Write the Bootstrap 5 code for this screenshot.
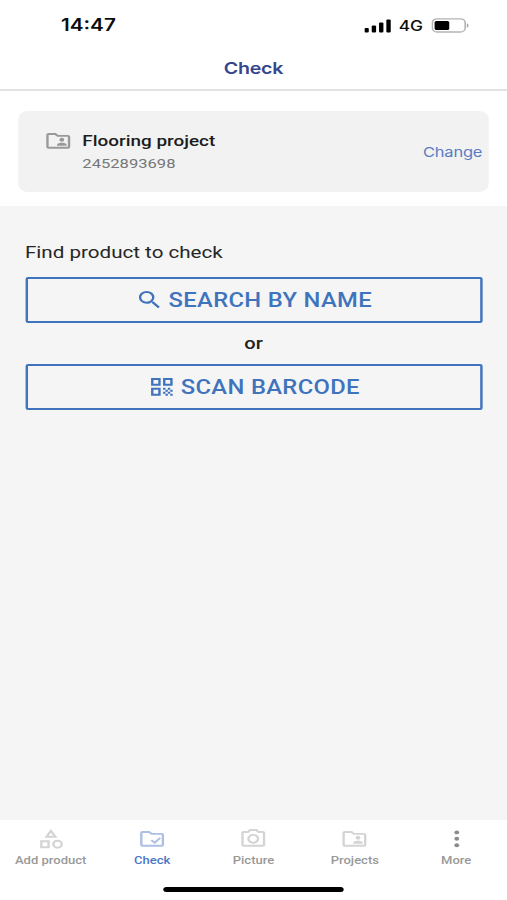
<!DOCTYPE html>
<html lang="en">
<head>
<meta charset="utf-8">
<meta name="viewport" content="width=device-width, initial-scale=1">
<title>Check</title>
<link href="https://cdn.jsdelivr.net/npm/bootstrap@5.3.0/dist/css/bootstrap.min.css" rel="stylesheet">
<style>
  html, body { height: 100%; overflow: hidden; }
  body { background: #fff; font-family: Roboto, "Liberation Sans", sans-serif; }
  .phone { width: 416px; height: 900px; transform: scaleX(1.21875); transform-origin: 0 0; background: #f5f5f5; }
  .phone svg { display: block; flex: none; }
  .ic { width: 23.6px; height: 23.6px; fill: currentColor; }
  .inter { font-family: Inter, "Liberation Sans", sans-serif; }
  .status { height: 50px; padding: 1px 31px 0 50px; color: #0c0c0c; }
  .clock { font-size: 17px; font-weight: 600; }
  .net { font-size: 14.2px; font-weight: 500; margin: 1px 7px 0 6.5px; }
  .title { height: 41px; padding-bottom: 3px; border-bottom: 2px solid #e3e3e3; color: #35468c; font-size: 16.1px; font-weight: 600; letter-spacing: -.2px; }
  .project-wrap { height: 115px; padding: 20px 14.8px 14px; }
  .project { background: #f2f2f2; border-radius: 8px; padding: 1px 5.5px 0 21.2px; }
  .project-name { font-size: 15.5px; line-height: 22px; padding-top: 1px; font-weight: 500; color: #1c1c1c; }
  .project-id { font-size: 13.6px; line-height: 23px; color: #777; }
  .change { font-size: 13.5px; letter-spacing: -.15px; color: #5a7cc2; padding-top: 1px; }
  .find { padding: 32px 20.5px 0; }
  .prompt { font-size: 16.9px; line-height: 26px; color: #262626; padding-top: 1px; margin-bottom: 12px; }
  .action { height: 46px; border: 2px solid #3f74bd; border-radius: 2px; color: #3f74bd; font-size: 19.5px; font-weight: 500; letter-spacing: .28px; padding: 0; --bs-btn-hover-color: #3f74bd; }
  .action-name { padding-top: 2px; }
  .or { height: 41px; font-size: 16.5px; font-weight: 500; color: #222; padding-top: 2px; }
  .tabs { height: 80px; }
  .tab { color: #999; font-size: 10.7px; line-height: 14px; padding-top: 7px; font-weight: 500; }
  .tab .ic { margin-bottom: 3px; color: #d4d4d4; }
  .tab.on { color: #4c77c6; }
  .tab.on .ic { color: #adbfe2; }
  .tab.more .ic { color: #8b8b8b; }
  .home { width: 148px; height: 5px; border-radius: 3px; background: #000; margin: 0 auto 8px; }
  .project .ic { color: #999; }
</style>
<script src="https://cdn.jsdelivr.net/npm/bootstrap@5.3.0/dist/js/bootstrap.bundle.min.js"></script>
</head>
<body>
<div class="phone d-flex flex-column">
  <header class="bg-white">
    <div class="status inter d-flex align-items-center">
      <span class="clock me-auto">14:47</span>
      <svg width="22" height="14" viewBox="0 0 22 14"><rect x="0" y="9" width="3.600" height="4.500" rx="1"/><rect x="6" y="6.500" width="3.600" height="7" rx="1"/><rect x="12" y="3.500" width="3.600" height="10" rx="1"/><rect x="18" y="0.500" width="3.600" height="13" rx="1"/></svg>
      <span class="net">4G</span>
      <svg width="31" height="15" viewBox="0 0 31 15"><rect x=".7" y=".8" width="27" height="13.200" rx="4" fill="none" stroke="#b3b3b3" stroke-width="1.300"/><rect x="2.600" y="3" width="12" height="9" rx="1.500"/><path d="M29 5.200c2 1 2 3.600 0 4.600z" fill="#aaa"/></svg>
    </div>
    <div class="title inter d-flex align-items-center justify-content-center"><span>Check</span></div>
    <div class="project-wrap">
      <div class="project h-100 d-flex align-items-center">
        <div class="d-flex flex-grow-1">
          <svg class="ic" viewBox="0 0 24 24"><path d="M20 6h-8l-2-2H4c-1.100 0-2 .9-2 2v12c0 1.100.9 2 2 2h16c1.100 0 2-.9 2-2V8c0-1.100-.9-2-2-2zm0 12H4V6h5.170l2 2H20v10zm-5-5c1.100 0 2-.9 2-2s-.9-2-2-2-2 .9-2 2 .9 2 2 2zm-4 4h8v-1c0-1.330-2.670-2-4-2s-4 .67-4 2v1z"/></svg>
          <div class="ms-2">
            <div class="project-name">Flooring project</div>
            <div class="project-id">2452893698</div>
          </div>
        </div>
        <a class="change inter text-decoration-none" href="#">Change</a>
      </div>
    </div>
  </header>

  <main class="find flex-grow-1">
    <div class="prompt">Find product to check</div>
    <button class="action btn w-100 d-flex align-items-center justify-content-center gap-1">
      <svg class="ic" viewBox="0 0 24 24"><path d="M15.500 14h-.79l-.28-.27A6.471 6.471 0 0 0 16 9.500 6.500 6.500 0 1 0 9.500 16c1.610 0 3.090-.59 4.230-1.570l.27.28v.79l5 4.990L20.490 19l-4.990-5zm-6 0C7.010 14 5 11.990 5 9.500S7.010 5 9.500 5 14 7.010 14 9.500 11.990 14 9.500 14z"/></svg>
      <span class="action-name">SEARCH BY NAME</span>
    </button>
    <div class="or d-flex align-items-center justify-content-center">or</div>
    <button class="action btn w-100 d-flex align-items-center justify-content-center gap-1">
      <svg class="ic" viewBox="0 0 24 24"><path fill-rule="evenodd" d="M3 11h8V3H3v8zm2-6h4v4H5V5zM3 21h8v-8H3v8zm2-6h4v4H5v-4zM13 3v8h8V3h-8zm6 6h-4V5h4v4zM19 19h2v2h-2zM13 13h2v2h-2zM15 15h2v2h-2zM13 17h2v2h-2zM15 19h2v2h-2zM17 17h2v2h-2zM17 13h2v2h-2zM19 15h2v2h-2z"/></svg>
      <span class="action-name">SCAN BARCODE</span>
    </button>
  </main>

  <footer class="bg-white">
    <nav class="tabs d-flex flex-column">
      <div class="row row-cols-5 g-0 text-center flex-grow-1">
        <div class="col tab d-flex flex-column align-items-center">
          <svg class="ic" viewBox="0 0 24 24"><path fill-rule="evenodd" d="M12 2l-5.500 9h11L12 2zm0 3.840L13.930 9h-3.870L12 5.840zM17.500 13a4.500 4.500 0 1 0 0 9 4.500 4.500 0 0 0 0-9zm0 7a2.500 2.500 0 1 1 0-5 2.500 2.500 0 0 1 0 5zM3 21.500h8v-8H3v8zm2-6h4v4H5v-4z"/></svg>
          <span>Add product</span>
        </div>
        <div class="col tab on d-flex flex-column align-items-center">
          <svg class="ic" viewBox="0 0 24 24"><path d="M20 6h-8l-2-2H4c-1.100 0-2 .9-2 2v12c0 1.100.9 2 2 2h16c1.100 0 2-.9 2-2V8c0-1.100-.9-2-2-2zm0 12H4V6h5.170l2 2H20v10z"/><path d="M11.300 13.300l2.900 2.700 4.600-4.900" fill="none" stroke="currentColor" stroke-width="1.800"/></svg>
          <span>Check</span>
        </div>
        <div class="col tab d-flex flex-column align-items-center">
          <svg class="ic" viewBox="0 0 24 24"><path d="M20 4h-3.170L15 2H9L7.170 4H4c-1.100 0-2 .9-2 2v12c0 1.100.9 2 2 2h16c1.100 0 2-.9 2-2V6c0-1.100-.9-2-2-2zm0 14H4V6h4.050l1.830-2h4.240l1.830 2H20v12zM12 7c-2.760 0-5 2.240-5 5s2.240 5 5 5 5-2.240 5-5-2.240-5-5-5zm0 8c-1.650 0-3-1.350-3-3s1.350-3 3-3 3 1.350 3 3-1.350 3-3 3z"/></svg>
          <span>Picture</span>
        </div>
        <div class="col tab d-flex flex-column align-items-center">
          <svg class="ic" viewBox="0 0 24 24"><path d="M20 6h-8l-2-2H4c-1.100 0-2 .9-2 2v12c0 1.100.9 2 2 2h16c1.100 0 2-.9 2-2V8c0-1.100-.9-2-2-2zm0 12H4V6h5.170l2 2H20v10zm-5-5c1.100 0 2-.9 2-2s-.9-2-2-2-2 .9-2 2 .9 2 2 2zm-4 4h8v-1c0-1.330-2.670-2-4-2s-4 .67-4 2v1z"/></svg>
          <span>Projects</span>
        </div>
        <div class="col tab more d-flex flex-column align-items-center">
          <svg class="ic" viewBox="0 0 24 24"><circle cx="12" cy="5.500" r="2"/><circle cx="12" cy="12" r="2"/><circle cx="12" cy="18.500" r="2"/></svg>
          <span>More</span>
        </div>
      </div>
      <div class="home"></div>
    </nav>
  </footer>
</div>
</body>
</html>
